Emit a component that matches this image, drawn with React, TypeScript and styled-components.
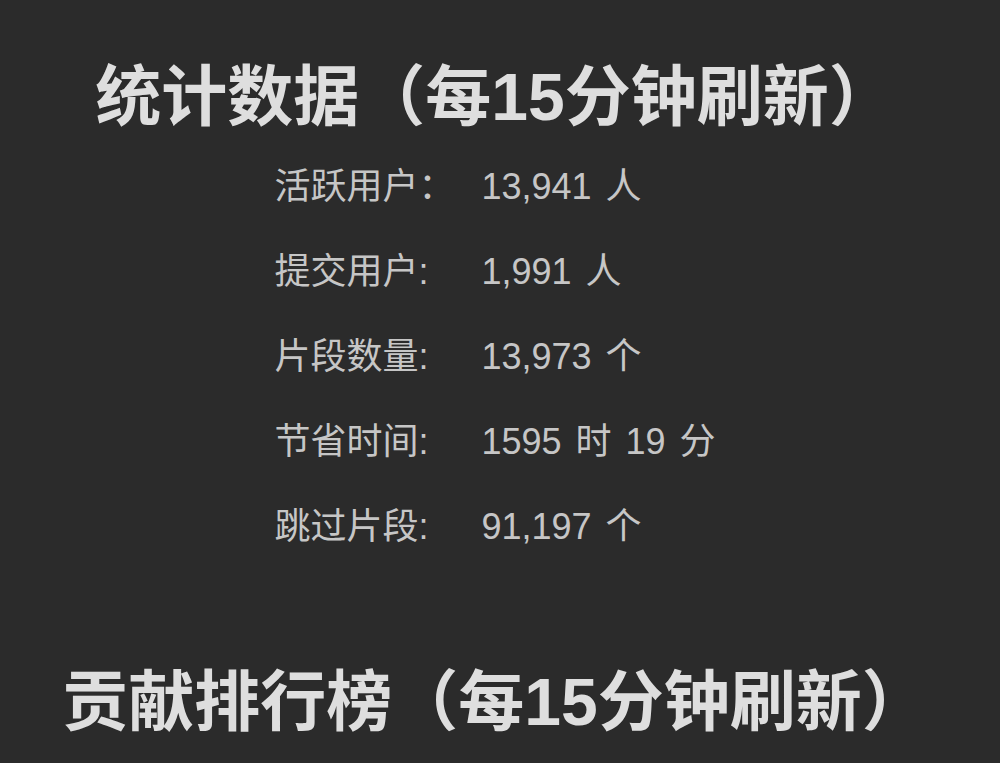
import React from "react";
import styled, { createGlobalStyle } from "styled-components";

const Global = createGlobalStyle`
  html, body {
    margin: 0;
    padding: 0;
    background: #2b2b2b;
  }
  body {
    font-family: "Liberation Sans", "Noto Sans CJK SC", sans-serif;
  }
`;

const Page = styled.div`
  width: 990px;
  padding-top: 58px;
  display: flex;
  flex-direction: column;
  align-items: center;
`;

const Heading = styled.h2<{ $top?: number }>`
  margin: ${(p) => p.$top ?? 0}px 0 0;
  font-size: 66px;
  line-height: 78px;
  font-weight: 700;
  color: #dedede;
  text-align: center;
  white-space: nowrap;
`;

const StatsGrid = styled.div`
  margin-top: 4px;
  display: grid;
  grid-template-columns: auto auto;
  column-gap: 27px;
  grid-auto-rows: 85px;
  align-items: center;
  font-size: 36px;
  color: #c6c6c6;
`;

const Label = styled.div`
  white-space: nowrap;
`;

const Value = styled.div`
  white-space: nowrap;
  word-spacing: 4px;
`;

const stats: [string, string][] = [
  ["活跃用户：", "13,941 人"],
  ["提交用户:", "1,991 人"],
  ["片段数量:", "13,973 个"],
  ["节省时间:", "1595 时 19 分"],
  ["跳过片段:", "91,197 个"],
];

export default function App() {
  return (
    <>
      <Global />
      <Page>
        <Heading>统计数据（每15分钟刷新）</Heading>
        <StatsGrid>
          {stats.map(([l, v]) => (
            <React.Fragment key={l}>
              <Label>{l}</Label>
              <Value>{v}</Value>
            </React.Fragment>
          ))}
        </StatsGrid>
        <Heading $top={98}>贡献排行榜（每15分钟刷新）</Heading>
      </Page>
    </>
  );
}
